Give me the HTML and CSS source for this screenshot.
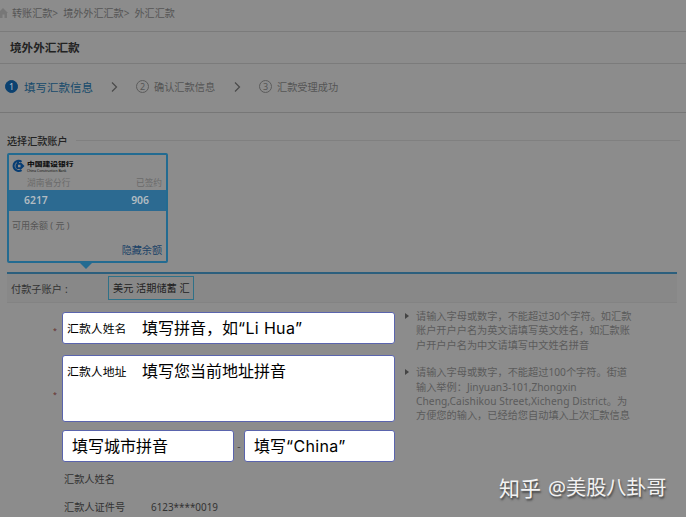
FILE: index.html
```html
<!DOCTYPE html>
<html lang="zh-CN">
<head>
<meta charset="utf-8">
<title>境外外汇汇款</title>
<link rel="stylesheet" href="styles.css">
</head>
<body>
<main class="page">
  <nav class="crumbs">
    <svg class="home" viewBox="0 0 12 12"><path d="M-2 6 3 1l5 5H7v5H4.500V7.500H2.500V11H0V6z"/></svg>
    <span class="crumb">转账汇款&gt;</span><span class="crumb">境外外汇汇款&gt;</span><span>外汇汇款</span>
  </nav>
  <h1 class="title">境外外汇汇款</h1>
  <div class="steps">
    <span class="step-num active">1</span><span class="step-text current">填写汇款信息</span>
    <svg class="chevron" viewBox="0 0 7 12"><path d="M1 1.500 5.500 6 1 10.500"/></svg>
    <span class="step-num">2</span><span class="step-text">确认汇款信息</span>
    <svg class="chevron second" viewBox="0 0 7 12"><path d="M1 1.500 5.500 6 1 10.500"/></svg>
    <span class="step-num">3</span><span class="step-text">汇款受理成功</span>
  </div>
  <h2 class="section">选择汇款账户</h2>
  <section class="card">
    <div class="bank">
      <svg class="logo" viewBox="0 0 14 14"><path class="logo-ring" d="M10.500 2.800A5 5 0 1 0 10.500 11"/><path class="logo-ring" d="M7 1v3.500"/><path class="logo-blue" fill-rule="evenodd" d="M6 4h4.500L13.500 7l-3 3H6L4.500 8.500v-3zM7 5.700v2.600h2.500V5.700z"/></svg>
      <div class="bank-name"><span>中国建设银行</span><small>China Construction Bank</small></div>
    </div>
    <div class="branch"><span>湖南省分行</span><span>已签约</span></div>
    <div class="number"><span>6217</span><span>906</span></div>
    <div class="balance">可用余额 ( 元 )</div>
    <div class="hide">隐藏余额</div>
  </section>
  <div class="pointer"></div>
  <div class="sub-account"><span class="sub-label">付款子账户<span class="colon">:</span></span><span class="currency">美元 活期储蓄 汇</span></div>
  <div class="form">
    <div class="fields">
      <div class="row"><i class="star">*</i><div class="box"><span class="label">汇款人姓名</span><span class="value">填写拼音，如<span class="latin">“Li Hua”</span></span></div></div>
      <div class="row address-row"><i class="star">*</i><div class="box"><span class="label">汇款人地址</span><span class="value">填写您当前地址拼音</span></div></div>
      <div class="row city-row"><i class="star"></i><div class="box city">填写城市拼音</div><span class="dash">-</span><div class="box country">填写<span class="latin">“China”</span></div></div>
    </div>
    <aside class="hints">
      <p class="hint">请输入字母或数字，不能超过30个字符。如汇款<br>账户开户户名为英文请填写英文姓名，如汇款账<br>户开户户名为中文请填写中文姓名拼音</p>
      <p class="hint">请输入字母或数字，不能超过100个字符。街道<br>输入举例：Jinyuan3-101,Zhongxin<br><span class="street">Cheng,Caishikou Street,Xicheng District。为</span><br>方便您的输入，已经给您自动填入上次汇款信息</p>
    </aside>
  </div>
  <div class="info"><span>汇款人姓名</span></div>
  <div class="info"><span class="info-label">汇款人证件号</span><span class="id-number">6123****0019</span></div>
  <div class="watermark"><span class="brand">知乎</span><span>@美股八卦哥</span></div>
</main>
</body>
</html>
```
FILE: styles.css
```css
* { box-sizing: border-box; }
body {
  margin: 0;
  background: #8c8c8c;
  color: #333;
  font-family: "Noto Sans", "Noto Sans CJK SC", sans-serif;
  font-size: 10.2px;
}
.page {
  position: relative;
  width: 686px;
  height: 517px;
  overflow: hidden;
  white-space: nowrap;
}
.crumbs {
  display: flex;
  align-items: center;
  height: 32px;
  padding-bottom: 6px;
  border-bottom: 1px solid #7b7b7b;
  color: #555;
  font-size: 10.1px;
}
.home { width: 12px; height: 12px; fill: #777; }
.crumb { margin-right: 5px; }
.title {
  height: 32px;
  margin: 0;
  padding-left: 10px;
  border-bottom: 1px solid #7b7b7b;
  color: #222;
  font-size: 11.6px;
  font-weight: 700;
  line-height: 32px;
}
.steps {
  display: flex;
  align-items: center;
  height: 49px;
  padding: 0 0 3px 5px;
  border-bottom: 1px solid #777;
  color: #555;
}
.step-num {
  width: 13px;
  height: 13px;
  border: 1px solid #5c5c5c;
  border-radius: 50%;
  font-size: 9px;
  line-height: 11px;
  text-align: center;
}
.step-num.active {
  border-color: #0b4170;
  background: #0b4170;
  color: #aebdca;
}
.step-text { width: 62px; margin-left: 5px; }
.step-text.current {
  width: 70px;
  margin-left: 6px;
  color: #154a6b;
  font-size: 11.5px;
}
.chevron {
  width: 7px;
  height: 12px;
  margin: 0 18px 0 17px;
  fill: none;
  stroke: #4a4a4a;
  stroke-width: 1.2;
}
.chevron.second { margin-left: 18px; }
.section {
  display: flex;
  align-items: center;
  gap: 8px;
  width: 673px;
  height: 16px;
  margin: 19px 0 0 7px;
  color: #222;
  font-size: 10.1px;
  font-weight: 500;
}
.section::after { content: ""; flex: 1; height: 1px; background: #808080; }
.card {
  width: 161px;
  height: 110px;
  margin: 5px 0 0 7px;
  border: 2px solid #236b91;
  border-radius: 2px;
}
.bank { display: flex; align-items: center; gap: 2px; height: 21px; padding-left: 2px; }
.logo { width: 14px; height: 14px; }
.logo-blue { fill: #073d73; }
.logo-ring { fill: none; stroke: #073d73; stroke-width: 2.2; }
.bank-name { display: flex; flex-direction: column; color: #111; }
.bank-name span {
  font-size: 6.2px;
  font-weight: 900;
  line-height: 9px;
  transform: scaleX(1.25);
  transform-origin: left;
}
.bank-name small { font-size: 3.4px; line-height: 5px; }
.branch {
  display: flex;
  justify-content: space-between;
  height: 14px;
  padding: 0 4px 0 18px;
  color: #6a6a6a;
  font-size: 8.7px;
  line-height: 14px;
}
.number {
  display: flex;
  justify-content: space-between;
  height: 21px;
  padding: 0 17px 0 15px;
  background: #2c6a91;
  color: #b2bcc2;
  font-size: 10.4px;
  font-weight: 600;
  line-height: 21px;
}
.balance { padding: 8px 0 0 3px; color: #555; font-size: 9px; line-height: 14px; }
.hide { padding: 10px 4px 0 0; color: #1b4267; font-size: 10.1px; line-height: 14px; text-align: right; }
.pointer {
  width: 12px;
  height: 6px;
  margin: 0 0 3px 80px;
  background: #236b91;
  clip-path: polygon(0 0, 100% 0, 50% 100%);
}
.sub-account {
  display: flex;
  align-items: center;
  width: 670px;
  height: 31px;
  margin-left: 7px;
  padding-left: 4px;
  border-top: 2px solid #2c5f7d;
  border-bottom: 1px solid #838383;
  background: #888;
}
.sub-label { width: 97px; }
.colon { margin-left: 3px; }
.currency {
  width: 86px;
  height: 24px;
  padding-left: 4px;
  border: 1px solid #2f7188;
  color: #222;
  line-height: 22px;
}
.form { display: flex; height: 153px; margin-top: 9px; }
.fields { width: 405px; }
.row { display: flex; align-items: center; padding-left: 53px; }
.star { width: 9px; padding-top: 5px; color: #632b2b; font-size: 7px; line-height: 10px; font-style: normal; }
.address-row .star { padding-top: 12px; }
.box {
  display: flex;
  width: 333px;
  height: 32px;
  padding-left: 4px;
  border: 1px solid #5a64ad;
  border-radius: 3px;
  background: #fff;
  color: #000;
  line-height: 30px;
}
.label { width: 75px; font-size: 11.9px; }
.value, .city, .country { font-size: 16px; }
.latin { font-family: Inter, sans-serif; font-size: 16px; letter-spacing: .35px; }
.address-row { margin-top: 11px; }
.address-row .box { height: 67px; }
.city-row { margin-top: 8px; }
.box.city { width: 172px; padding-left: 9px; }
.box.country { width: 151px; padding-left: 9px; }
.dash { width: 10px; color: #444; text-align: center; }
.hints { color: #5b5b5b; line-height: 14.4px; }
.hint { position: relative; margin: -3px 0 13px; padding-left: 11px; }
.hint + .hint { margin-top: 0; }
.hint::before {
  content: "";
  position: absolute;
  left: 0;
  top: 4px;
  border: 3px solid transparent;
  border-left: 4px solid #444;
  border-right: 0;
}
.street { letter-spacing: .06px; }
.info { display: flex; height: 28px; padding-left: 64px; line-height: 28px; }
.info-label { width: 87px; }
.id-number { font-size: 9.9px; }
.watermark {
  position: absolute;
  left: 499px;
  top: 473px;
  display: flex;
  gap: 7px;
  color: #f2f2f2;
  font-size: 20.1px;
  line-height: 30px;
  text-shadow: 1px 2px 2px #444;
}
.brand { font-size: 21px; }
```
